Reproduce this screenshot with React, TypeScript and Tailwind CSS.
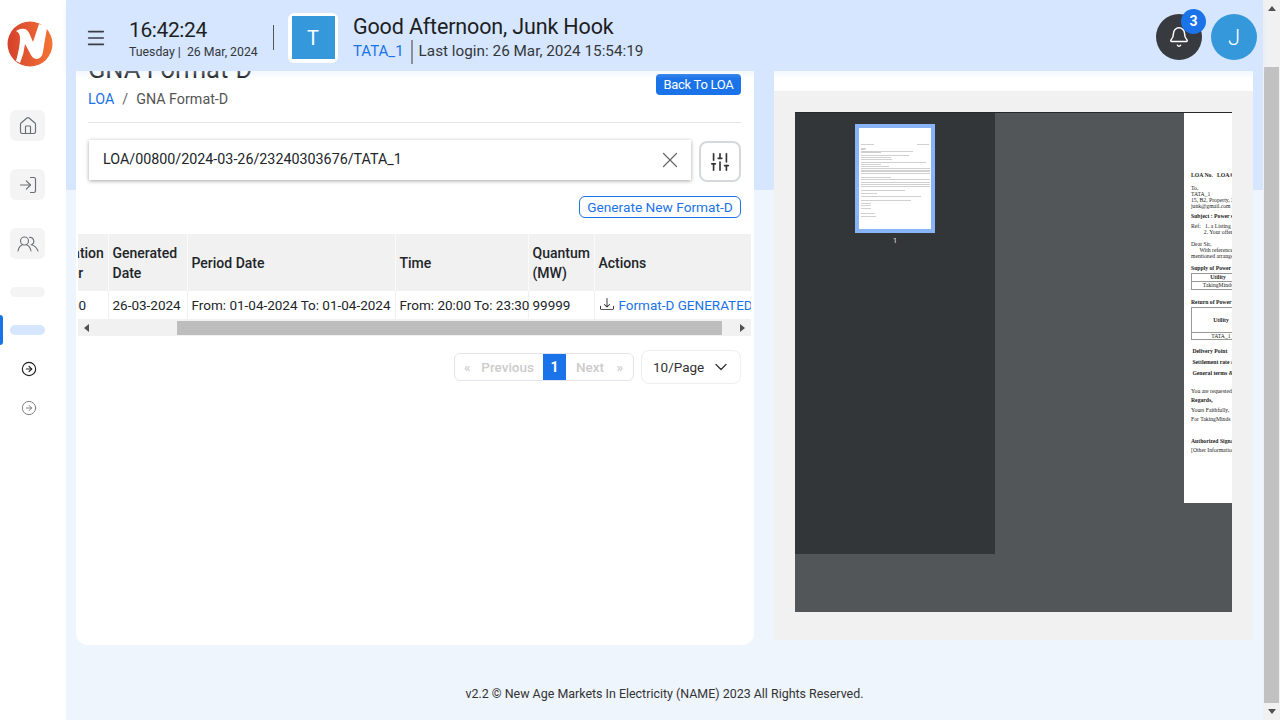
import { Bell, ChevronDown, CircleArrowRight, House, LogIn, Menu, SlidersVertical, X } from "lucide-react";
import { BsDownload } from "react-icons/bs";

const docLines = [
  { top: 59, text: "LOA No.   LOA/00800/2024-03-26", bold: true },
  { top: 7, text: "To," },
  { top: 0, text: "TATA_1" },
  { top: 0, text: "15, B2, Property, 3rd Floor" },
  { top: 0, text: "junk@gmail.com" },
  { top: 4, text: "Subject : Power supply", bold: true },
  { top: 4, text: "Ref:   1. a Listing of" },
  { top: 0, text: "         2. Your offer" },
  { top: 6, text: "Dear Sir," },
  { top: 0, text: "      With reference to" },
  { top: 0, text: "mentioned arrangement" },
  { top: 6, text: "Supply of Power by", bold: true },
];

const docLinesBottom = [
  { top: 8, text: " Delivery Point", bold: true },
  { top: 5, text: " Settlement rate and", bold: true },
  { top: 5, text: " General terms &", bold: true },
  { top: 12, text: "You are requested to" },
  { top: 3, text: "Regards,", bold: true },
  { top: 4, text: "Yours Faithfully," },
  { top: 3, text: "For TakingMinds" },
  { top: 16, text: "Authorized Signatory", bold: true },
  { top: 3, text: "[Other Information]" },
];

// y, x, width of each greyed line in the page thumbnail
const thumbRows = [
  [16, 2, 13], [16, 58, 12], [20, 2, 5], [21, 2, 4], [23, 2, 52], [24, 2, 20], [27, 2, 48], [29, 2, 30],
  [31, 2, 31], [34, 2, 65], [36, 2, 20], [38, 2, 28], [40, 2, 69], [42, 2, 69], [43, 2, 69], [45, 2, 69],
  [49, 2, 30], [51, 2, 69], [54, 2, 69], [56, 2, 69], [58, 2, 69], [62, 2, 44], [65, 2, 16], [68, 2, 60],
  [72, 2, 50], [75, 2, 10], [77, 2, 10], [80, 2, 10], [85, 2, 14], [88, 2, 15],
];

function SideIcon({ children }: { children: React.ReactNode }) {
  return (
    <div className="flex h-[31px] w-[35px] items-center justify-center rounded-md bg-[#f4f4f4] text-[#6b6f73]">
      {children}
    </div>
  );
}

export default function App() {
  return (
    <div className="flex h-[720px] w-[1280px] overflow-hidden font-['Roboto',sans-serif] text-[#212529]">
      {/* sidebar */}
      <aside className="flex w-[66px] shrink-0 flex-col bg-white">
        <div className="ml-[7px] mt-[21px] h-[46px] w-[46px]">
          <svg viewBox="0 0 46 46" className="h-[46px] w-[46px]">
            <defs>
              <linearGradient id="logo" x1="0" y1="0" x2="1" y2="0">
                <stop offset="0" stopColor="#d5412c" />
                <stop offset="1" stopColor="#f47435" />
              </linearGradient>
            </defs>
            <circle cx="23" cy="23" r="22.5" fill="url(#logo)" />
            <path
              d="M9 10 Q13 7 18 8 Q21 9 23 14 L26 21 L32 3 Q37 4 40 7 Q38 18 36 31 Q35 37 30 38 Q26 38 24 34 L18 23 Q17 33 13 42 Q11 41 9 40 Q13 26 13 17 Q13 12 9 10 Z"
              fill="#fff"
            />
          </svg>
        </div>
        <div className="ml-[10px] mt-[43px] flex flex-col gap-[28px]">
          <SideIcon><House size={20} strokeWidth={1.4} /></SideIcon>
          <SideIcon><LogIn size={20} strokeWidth={1.4} /></SideIcon>
          <SideIcon>
            <svg viewBox="0 0 22 16" className="h-[16px] w-[22px]" fill="none" stroke="currentColor" strokeWidth="1.1" strokeLinecap="round">
              <circle cx="7.5" cy="5" r="4" />
              <path d="M1 15 Q2 10 5.5 8.8 M9.5 8.8 Q13 10 14 15" />
              <path d="M12.5 1.2 A4 4 0 0 1 14.5 8.8 Q19 10 21 15" />
            </svg>
          </SideIcon>
        </div>
        <div className="ml-[10px] mt-[28px] h-[10px] w-[35px] rounded-full bg-[#f4f4f4]" />
        <div className="mt-[18px] flex h-[30px] items-center">
          <div className="h-[30px] w-[3px] rounded-r bg-[#1a73e8]" />
          <div className="ml-[7px] h-[10px] w-[35px] rounded-full bg-[#d6e6fe]" />
        </div>
        <div className="ml-[21px] mt-[16px] text-[#222]"><CircleArrowRight size={16} strokeWidth={1.7} /></div>
        <div className="ml-[21px] mt-[23px] text-[#777]"><CircleArrowRight size={16} strokeWidth={1.4} /></div>
      </aside>

      {/* main */}
      <div className="flex min-w-0 flex-1 flex-col bg-[linear-gradient(#d6e6fe_190px,#eef5fd_190px)]">
        <header className="relative z-10 flex h-[71px] shrink-0 items-center bg-[#d6e6fe] pl-[19px] pr-[6px] shadow-[0_3px_6px_rgba(214,230,254,0.4)]">
          <Menu size={22} strokeWidth={1.8} className="mt-[5px] text-[#3a3f44]" />
          <div className="ml-[22px] mt-[5px] flex w-[144px] shrink-0 flex-col">
            <div className="text-[21px] leading-[26px] tracking-[-0.4px] text-[#1c1f22]">16:42:24</div>
            <div className="mt-[1px] text-[12.3px] leading-[16px] text-[#33373b]">Tuesday |&nbsp; 26 Mar, 2024</div>
          </div>
          <div className="mt-[4px] h-[25px] w-px bg-[#555]" />
          <div className="ml-[14px] mt-[4px] flex h-[50px] w-[50px] items-center justify-center rounded-md bg-white">
            <div className="flex h-[43px] w-[43px] items-center justify-center bg-[#3498db] text-[20px] text-white">T</div>
          </div>
          <div className="ml-[15px] mt-[5px] flex flex-col">
            <div className="text-[21.5px] leading-[27px] tracking-[-0.15px] text-[#1c1f22]">Good Afternoon, Junk Hook</div>
            <div className="flex h-[24px] items-center text-[15.3px]">
              <span className="text-[15px] text-[#1a73e8]">TATA_1</span>
              <span className="mx-[7px] h-[24px] w-[2px] bg-[#8a9199]" />
              <span className="-ml-px text-[#33373b]">Last login: 26 Mar, 2024 15:54:19</span>
            </div>
          </div>
          <div className="ml-auto mt-[3px] flex items-center gap-[9px]">
            <div className="relative flex h-[46px] w-[46px] items-center justify-center rounded-full bg-[#373b40] text-white">
              <Bell size={22} strokeWidth={1.6} />
              <span className="absolute -right-[4px] -top-[5px] flex h-[25px] w-[25px] items-center justify-center rounded-full bg-[#1a73e8] text-[14px] font-bold">3</span>
            </div>
            <div className="flex h-[46px] w-[46px] items-center justify-center rounded-full bg-[#3498db] text-[22px] font-light text-white">J</div>
          </div>
        </header>

        <div className="flex gap-[20px] px-[10px]">
          {/* left card */}
          <div className="h-[574px] w-[678px] shrink-0 overflow-hidden rounded-b-xl bg-white pl-[12px] pr-[13px]">
            <div className="flex h-[24px] items-start justify-between">
              <h1 className="-mt-[16px] text-[25.5px] leading-[29px] text-[#212529]">GNA Format-D</h1>
              <button className="mt-[3px] flex h-[21px] w-[85px] items-center justify-center rounded bg-[#1a73e8] text-[13px] tracking-[-0.3px] text-white">Back To LOA</button>
            </div>
            <div className="-mt-[4px] flex items-center gap-[8px] text-[14.3px] leading-[17px]">
              <span className="text-[#1a73e8]">LOA</span>
              <span className="text-[#666]">/</span>
              <span className="text-[#555]">GNA Format-D</span>
            </div>
            <div className="mt-[14px] h-px bg-[#e3e3e3]" />
            <div className="mt-[17px] flex items-start gap-[8px]">
              <div className="ml-px flex h-[40px] w-[602px] items-center justify-between bg-white pl-[14px] pr-[8px] text-[14.3px] shadow-[0_1px_4px_rgba(0,0,0,0.35)]">
                <span>LOA/00800/2024-03-26/23240303676/TATA_1</span>
                <X size={26} strokeWidth={1.1} className="text-[#666]" />
              </div>
              <div className="mt-px flex h-[41px] w-[42px] items-center justify-center rounded-lg border-2 border-[#d5d9de]">
                <SlidersVertical size={22} strokeWidth={1.8} className="text-[#333]" />
              </div>
            </div>
            <div className="mt-[14px] flex justify-end">
              <button className="h-[22px] w-[162px] rounded-md border border-[#1a73e8] text-[13.7px] text-[#1a73e8]">Generate New Format-D</button>
            </div>

            {/* table scrolled sideways, as in the page */}
            <div className="-ml-[10px] mt-[16px] w-[673px] overflow-hidden">
              <table className="-ml-[50px] w-[773px] table-fixed border-collapse whitespace-nowrap text-[13.5px]">
                <colgroup>
                  <col className="w-[80px]" />
                  <col className="w-[79px]" />
                  <col className="w-[208px]" />
                  <col className="w-[133px]" />
                  <col className="w-[66px]" />
                  <col className="w-[207px]" />
                </colgroup>
                <thead>
                  <tr className="h-[57px] bg-[#f1f1f1] text-left text-[14px] leading-[20px]">
                    <th className="whitespace-normal border-r border-[#fafafa] pl-[5px] font-medium">Application Number</th>
                    <th className="whitespace-normal border-r border-[#fafafa] pl-[4px] font-medium">Generated Date</th>
                    <th className="border-r border-[#fafafa] pl-[4px] font-medium">Period Date</th>
                    <th className="border-r border-[#fafafa] pl-[4px] font-medium">Time</th>
                    <th className="whitespace-normal border-r border-[#fafafa] pl-[4px] font-medium">Quantum (MW)</th>
                    <th className="pl-[4px] font-medium">Actions</th>
                  </tr>
                </thead>
                <tbody>
                  <tr className="h-[28px]">
                    <td className="border-r border-[#f1f1f1] pl-[5px]">1000000</td>
                    <td className="border-r border-[#f1f1f1] pl-[4px]">26-03-2024</td>
                    <td className="border-r border-[#f1f1f1] pl-[4px]">From: 01-04-2024 To: 01-04-2024</td>
                    <td className="border-r border-[#f1f1f1] pl-[4px]">From: 20:00 To: 23:30</td>
                    <td className="border-r border-[#f1f1f1] pl-[4px]">99999</td>
                    <td className="pl-[5px]">
                      <span className="flex items-center gap-[5px] text-[#1a73e8]">
                        <BsDownload size={14} className="-mt-[2px] text-[#222]" />
                        Format-D GENERATED
                      </span>
                    </td>
                  </tr>
                </tbody>
              </table>
              <div className="flex h-[17px] items-center bg-[#f1f1f1]">
                <span className="ml-[6px] h-0 w-0 border-y-[4px] border-r-[5px] border-y-transparent border-r-[#505050]" />
                <div className="ml-[88px] h-[14px] w-[545px] bg-[#bdbdbd]" />
                <span className="ml-[18px] h-0 w-0 border-y-[4px] border-l-[5px] border-y-transparent border-l-[#505050]" />
              </div>
            </div>

            <div className="mt-[14px] flex items-center justify-end gap-[7px]">
              <div className="flex h-[28px] w-[180px] items-center overflow-hidden rounded-md border border-[#e2e5ec] text-[13.5px] text-[#ccc]">
                <span className="flex w-[88px] justify-between pl-[9px] pr-[9px] font-medium"><span>«</span><span>Previous</span></span>
                <span className="flex h-full w-[23px] items-center justify-center bg-[#1a73e8] text-[14px] font-bold text-white">1</span>
                <span className="flex flex-1 justify-between pl-[10px] pr-[10px] font-medium"><span>Next</span><span>»</span></span>
              </div>
              <div className="flex h-[34px] w-[100px] items-center justify-between rounded-lg border border-[#eceef2] pl-[11px] pr-[9px] text-[13.5px] text-[#333]">
                10/Page
                <ChevronDown size={20} strokeWidth={1.5} />
              </div>
            </div>
          </div>

          {/* pdf preview */}
          <div className="h-[569px] w-[479px] shrink-0 bg-white">
            <div className="mt-[20px] h-[549px] bg-[#f1f1f1] pl-[21px] pt-[21px]">
              <div className="flex h-[500px] w-[437px] overflow-hidden border-t border-[#26282b] bg-[#525659]">
                <div className="flex h-[441px] w-[200px] shrink-0 flex-col items-center bg-[#323639] pt-[11px]">
                  <div className="h-[109px] w-[80px] bg-[#8ab4f8] p-[4px]">
                    <div className="h-full overflow-hidden bg-white">
                      <div className="flow-root">
                        {thumbRows.map(([y, x, width], i) => (
                          <div
                            key={i}
                            className="h-px bg-[#d0d0d0]"
                            style={{ marginTop: i === 0 ? y : Math.max(y - thumbRows[i - 1][0] - 1, -1), marginLeft: x, width }}
                          />
                        ))}
                      </div>
                    </div>
                  </div>
                  <div className="mt-[2px] text-[8px] text-[#ddd]">1</div>
                </div>
                <div className="ml-[189px] h-[390px] w-[400px] shrink-0 bg-white pl-[7px] font-['Liberation_Serif',serif] text-[5.7px] leading-[6px] text-[#222]">
                  {docLines.map((l, i) => (
                    <div key={i} className={`whitespace-pre ${l.bold ? "font-bold" : ""}`} style={{ marginTop: l.top }}>{l.text}</div>
                  ))}
                  <div className="mt-[2px] w-[100px] border border-[#999]">
                    <div className="h-[8px] border-b border-[#999] font-bold"><div className="w-[52px] text-center">Utility</div></div>
                    <div className="h-[7px]"><div className="w-[52px] text-center">TakingMinds</div></div>
                  </div>
                  <div className="mt-[9px] font-bold">Return of Power</div>
                  <div className="mt-[2px] w-[100px] border border-[#999]">
                    <div className="flex h-[25px] items-center border-b border-[#999] font-bold"><div className="w-[58px] text-center">Utility</div></div>
                    <div className="w-[58px] text-center">TATA_1</div>
                  </div>
                  {docLinesBottom.map((l, i) => (
                    <div key={i} className={`whitespace-pre ${l.bold ? "font-bold" : ""}`} style={{ marginTop: l.top }}>{l.text}</div>
                  ))}
                </div>
              </div>
            </div>
          </div>
        </div>

        <footer className="mt-[41px] text-center text-[12.45px] leading-[16px] text-[#333]">
          v2.2 © New Age Markets In Electricity (NAME) 2023 All Rights Reserved.
        </footer>
      </div>

      {/* page scrollbar */}
      <div className="flex w-[17px] shrink-0 flex-col items-center bg-[#f1f1f1]">
        <span className="mt-[6px] h-0 w-0 border-x-[4px] border-b-[5px] border-x-transparent border-b-[#505050]" />
        <div className="mt-[56px] h-[636px] w-[15px] bg-[#c1c1c1]" />
        <span className="mt-[6px] h-0 w-0 border-x-[4px] border-t-[5px] border-x-transparent border-t-[#505050]" />
      </div>
    </div>
  );
}
